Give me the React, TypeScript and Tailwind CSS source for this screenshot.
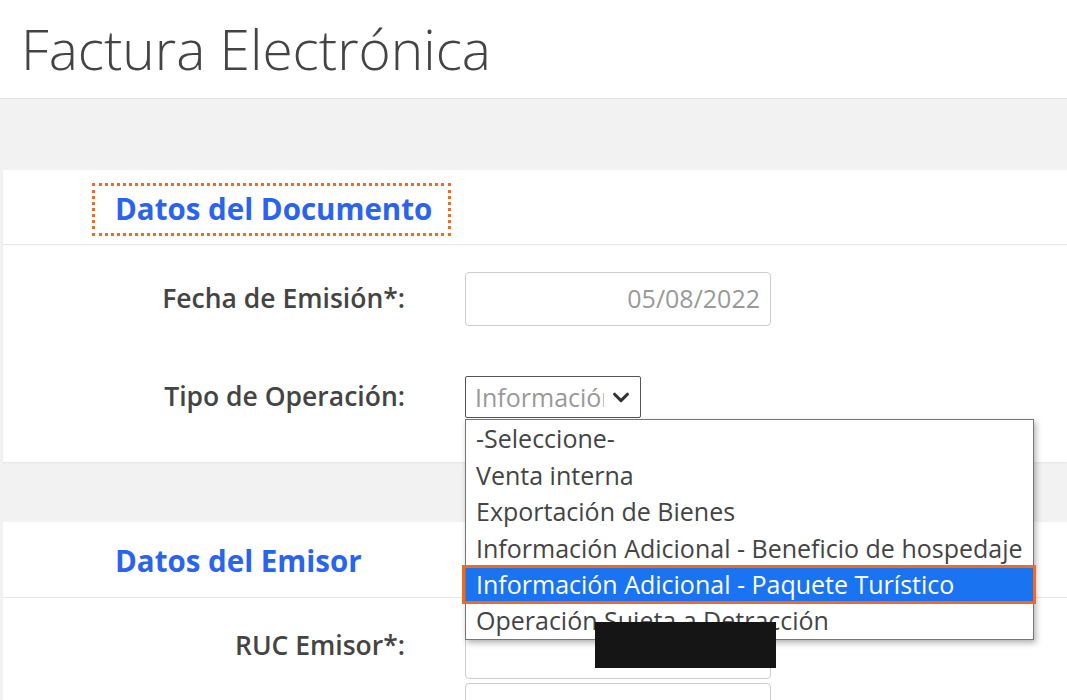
const options = [
  "-Seleccione-",
  "Venta interna",
  "Exportación de Bienes",
  "Información Adicional - Beneficio de hospedaje",
  "Información Adicional - Paquete Turístico",
  "Operación Sujeta a Detracción",
];

const SELECTED = 4;

export default function App() {
  return (
    <div className="min-h-[700px] overflow-hidden bg-[#f2f2f2] font-['Open_Sans',sans-serif] text-[#444]">
      <header className="flex h-[99px] items-start border-b border-[#e2e2e2] bg-white pl-[21px] pt-[11px]">
        <h1 className="text-[55px] font-light leading-[75px] text-[#444]">Factura Electrónica</h1>
      </header>

      <div className="pt-[71px]">
        <section className="ml-[3px] bg-white shadow-[0_1px_2px_rgba(0,0,0,0.06)]">
          <div className="flex h-[75px] items-center border-b border-[#e6e6e6] pl-[89px] pt-[4px]">
            <h2 className="h-[53px] border-[3px] border-dotted border-[#f26a21] pl-[20px] pr-[16px] text-[29.5px] font-bold leading-[46px] text-[#2a64ee]">
              Datos del Documento
            </h2>
          </div>
          <div className="pb-[44px] pt-[27px]">
            <div className="flex items-center">
              <Label>Fecha de Emisión*:</Label>
              <div className="flex h-[54px] w-[306px] items-center justify-end rounded-[4px] border border-[#ccc] pr-[10px] text-[25px] text-[#999]">
                05/08/2022
              </div>
            </div>
            <div className="mt-[50px] flex items-center">
              <Label>Tipo de Operación:</Label>
              <div className="relative">
                <div className="flex h-[42px] w-[176px] items-center rounded-[2px] border border-[#555] pl-[9px] pr-[6px]">
                  <span className="w-[129px] overflow-hidden whitespace-nowrap text-[25px] leading-[40px] text-[#999]">Información</span>
                  <svg viewBox="0 0 24 24" className="ml-[6px] h-[22px] w-[22px]" fill="none" stroke="#333" strokeWidth="3.4" strokeLinecap="round" strokeLinejoin="round">
                    <path d="M5 9l7 7 7-7" />
                  </svg>
                </div>
                <ul className="absolute left-0 top-[43px] z-10 w-[569px] border border-[#767676] bg-white text-[25px] leading-[36px] text-[#444] shadow-[2px_3px_6px_rgba(0,0,0,0.3)]">
                  {options.map((o, i) =>
                    i === SELECTED ? (
                      <li key={o} className="relative h-[36px] whitespace-nowrap bg-[#1a73f0] pl-[10px] text-white">
                        {o}
                        <span className="absolute -bottom-[2px] -left-[4px] -right-[3px] -top-[1px] border-[3px] border-[#f26a21]" />
                      </li>
                    ) : (
                      <li key={o} className="h-[36.5px] whitespace-nowrap pl-[10px]">
                        {o}
                      </li>
                    )
                  )}
                </ul>
              </div>
            </div>
          </div>
        </section>

        <section className="relative ml-[3px] mt-[60px] h-[200px] bg-white">
          <div className="flex h-[76px] items-center border-b border-[#e6e6e6] pl-[112px]">
            <h2 className="pt-[3px] text-[29.5px] font-bold text-[#2a64ee]">Datos del Emisor</h2>
          </div>
          <div className="pt-[27px]">
            <div className="flex items-start">
              <div className="w-[402px] text-right text-[26.5px] font-semibold leading-[40px] text-[#444]">RUC Emisor*:</div>
              <div className="ml-[60px]">
                <div className="h-[54px] w-[306px] rounded-[4px] border border-[#ccc]" />
                <div className="mt-[4px] h-[54px] w-[306px] rounded-[4px] border border-[#ccc]" />
              </div>
            </div>
          </div>
          <div className="absolute left-[592px] top-[100px] z-20 h-[46px] w-[181px] bg-[#151515]" />
        </section>
      </div>
    </div>
  );
}

function Label({ children }: { children: React.ReactNode }) {
  return (
    <div className="mr-[60px] w-[402px] text-right text-[26.5px] font-semibold text-[#444]">{children}</div>
  );
}
